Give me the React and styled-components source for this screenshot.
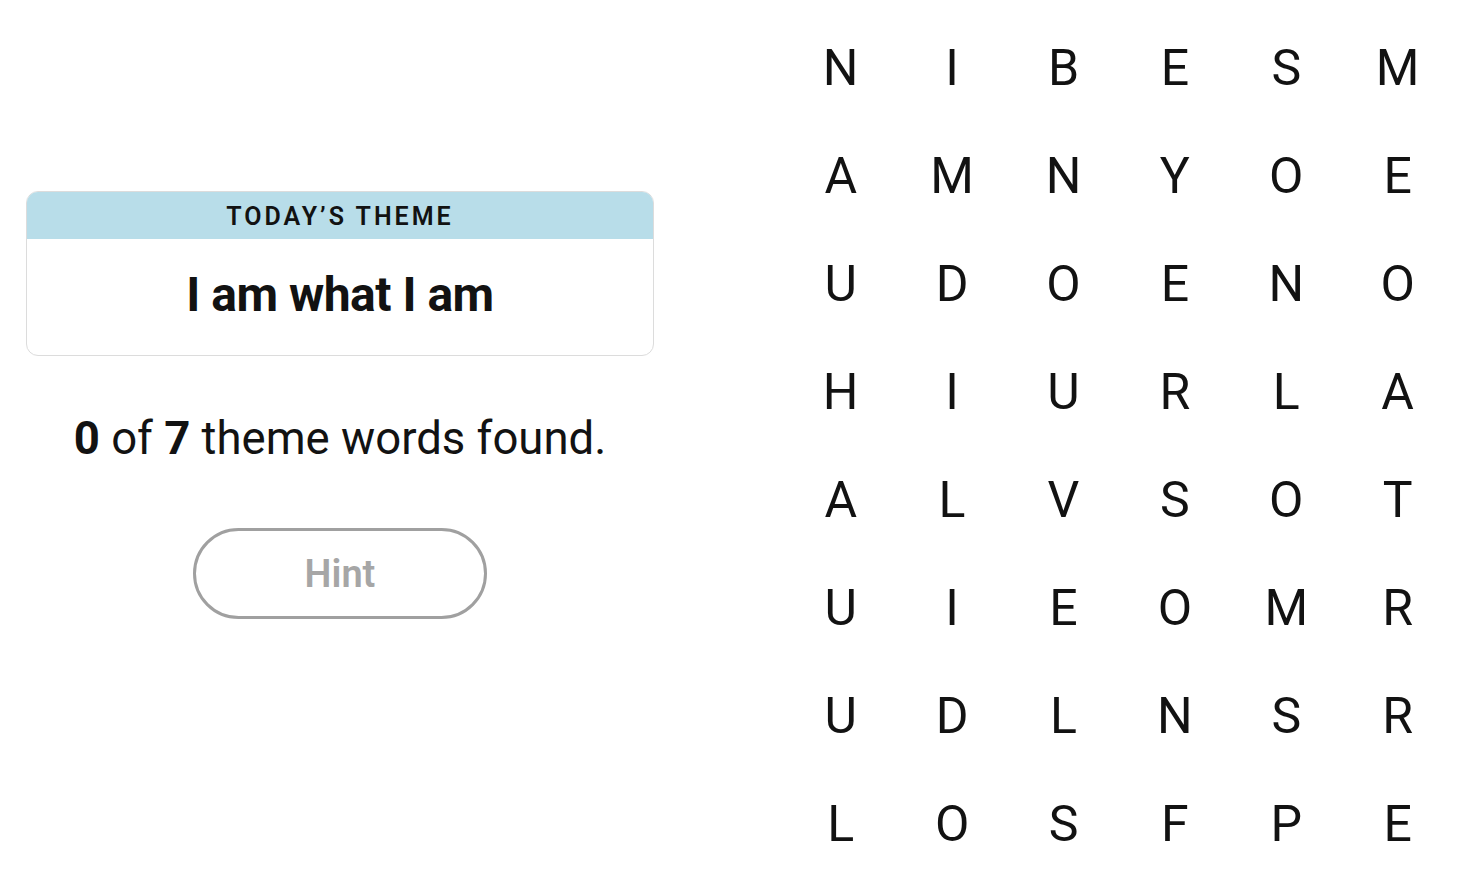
import styled, { createGlobalStyle } from "styled-components";

const GlobalStyle = createGlobalStyle`
    html, body {
        margin: 0;
        padding: 0;
        background: #ffffff;
        font-family: Roboto, "Liberation Sans", sans-serif;
        color: #121212;
    }
`;

const GRID = [
    "NIBESM",
    "AMNYOE",
    "UDOENO",
    "HIURLA",
    "ALVSOT",
    "UIEOMR",
    "UDLNSR",
    "LOSFPE",
];

export default function App() {
    return (
        <Page>
            <GlobalStyle />
            <Side>
                <ThemeCard>
                    <ThemeHeader>TODAY’S THEME</ThemeHeader>
                    <ThemeBody>I am what I am</ThemeBody>
                </ThemeCard>
                <Progress>
                    <b>0</b> of <b>7</b> theme words found.
                </Progress>
                <HintButton disabled>Hint</HintButton>
            </Side>
            <Board>
                {GRID.map((row, r) =>
                    row.split("").map((ch, c) => (
                        <Letter key={`${r}-${c}`}>{ch}</Letter>
                    ))
                )}
            </Board>
        </Page>
    );
}

const Page = styled.div`
    width: 1462px;
    height: 896px;
    display: flex;
    align-items: flex-start;
    box-sizing: border-box;
    padding: 14px 0 0 26px;
`;

const Side = styled.div`
    width: 628px;
    padding-top: 177px;
    display: flex;
    flex-direction: column;
    align-items: center;
`;

const ThemeCard = styled.div`
    width: 100%;
    box-sizing: border-box;
    border: 1px solid #dcdcdc;
    border-radius: 12px;
    overflow: hidden;
`;

const ThemeHeader = styled.div`
    height: 47px;
    background: #b8dde9;
    display: flex;
    align-items: center;
    justify-content: center;
    font-size: 25px;
    font-weight: 600;
    letter-spacing: 3px;
    padding-top: 2px;
    box-sizing: border-box;
`;

const ThemeBody = styled.div`
    height: 116px;
    display: flex;
    align-items: center;
    justify-content: center;
    padding-bottom: 6px;
    box-sizing: border-box;
    font-size: 48px;
    font-weight: 700;
    letter-spacing: -0.5px;
`;

const Progress = styled.p`
    margin: 57px 0 0;
    font-size: 45.5px;
    line-height: 52px;
    font-weight: 400;
    b {
        font-weight: 700;
    }
`;

const HintButton = styled.button`
    margin-top: 63px;
    width: 294px;
    height: 91px;
    border-radius: 46px;
    border: 3px solid #a0a0a0;
    background: #ffffff;
    color: #a6a6a6;
    font-family: Roboto, "Liberation Sans", sans-serif;
    font-size: 38px;
    font-weight: 600;
`;

const Board = styled.div`
    margin-left: 131px;
    display: grid;
    grid-template-columns: repeat(6, 111.4px);
    grid-auto-rows: 108px;
`;

const Letter = styled.div`
    display: flex;
    align-items: center;
    justify-content: center;
    font-size: 50px;
    font-weight: 400;
    color: #121212;
`;
